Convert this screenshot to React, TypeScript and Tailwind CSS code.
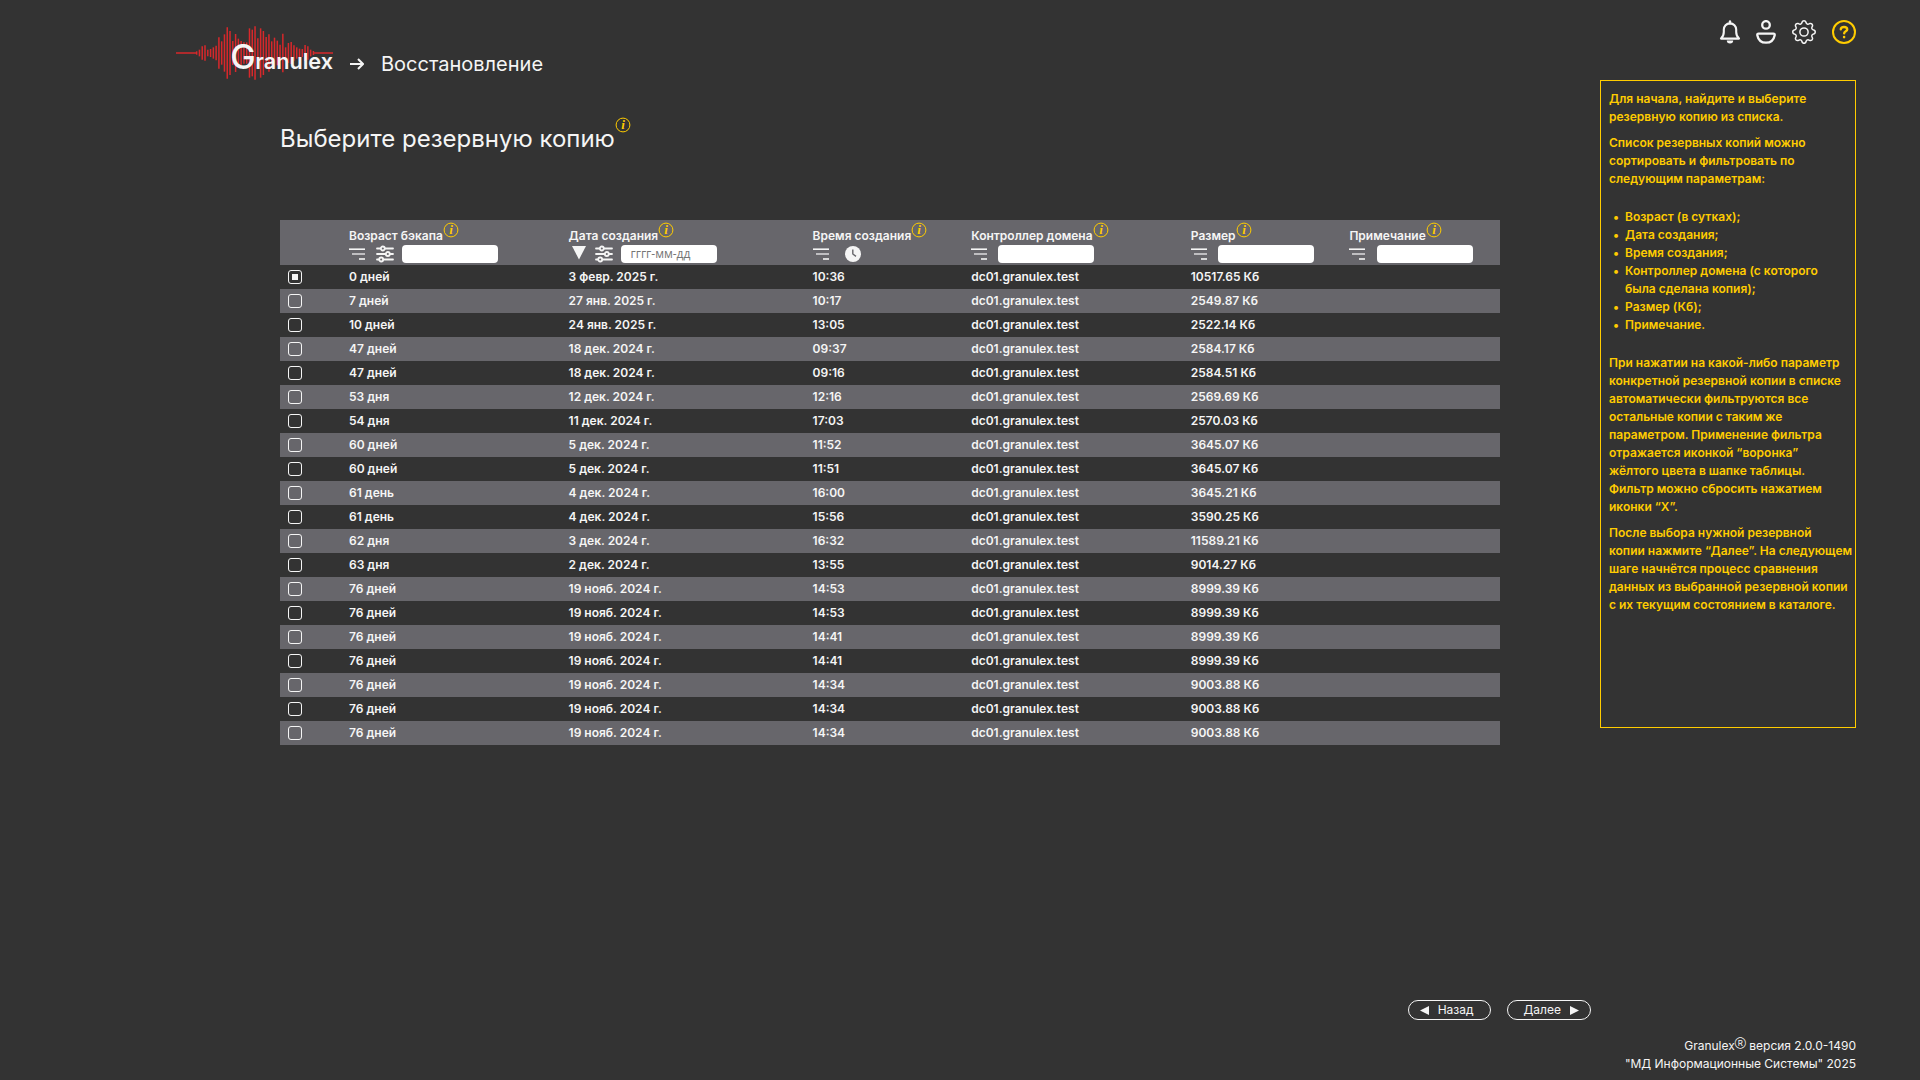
import { FC, ReactNode, useState } from "react";
import { BsGear } from "react-icons/bs";

type Backup = [age: string, date: string, time: string, size: string];

const DC = "dc01.granulex.test";

const backups: Backup[] = [
  ["0 дней", "3 февр. 2025 г.", "10:36", "10517.65 Кб"],
  ["7 дней", "27 янв. 2025 г.", "10:17", "2549.87 Кб"],
  ["10 дней", "24 янв. 2025 г.", "13:05", "2522.14 Кб"],
  ["47 дней", "18 дек. 2024 г.", "09:37", "2584.17 Кб"],
  ["47 дней", "18 дек. 2024 г.", "09:16", "2584.51 Кб"],
  ["53 дня", "12 дек. 2024 г.", "12:16", "2569.69 Кб"],
  ["54 дня", "11 дек. 2024 г.", "17:03", "2570.03 Кб"],
  ["60 дней", "5 дек. 2024 г.", "11:52", "3645.07 Кб"],
  ["60 дней", "5 дек. 2024 г.", "11:51", "3645.07 Кб"],
  ["61 день", "4 дек. 2024 г.", "16:00", "3645.21 Кб"],
  ["61 день", "4 дек. 2024 г.", "15:56", "3590.25 Кб"],
  ["62 дня", "3 дек. 2024 г.", "16:32", "11589.21 Кб"],
  ["63 дня", "2 дек. 2024 г.", "13:55", "9014.27 Кб"],
  ["76 дней", "19 нояб. 2024 г.", "14:53", "8999.39 Кб"],
  ["76 дней", "19 нояб. 2024 г.", "14:53", "8999.39 Кб"],
  ["76 дней", "19 нояб. 2024 г.", "14:41", "8999.39 Кб"],
  ["76 дней", "19 нояб. 2024 г.", "14:41", "8999.39 Кб"],
  ["76 дней", "19 нояб. 2024 г.", "14:34", "9003.88 Кб"],
  ["76 дней", "19 нояб. 2024 г.", "14:34", "9003.88 Кб"],
  ["76 дней", "19 нояб. 2024 г.", "14:34", "9003.88 Кб"],
];

const helpItems = [
  "Возраст (в сутках);",
  "Дата создания;",
  "Время создания;",
  "Контроллер домена (с которого была сделана копия);",
  "Размер (Кб);",
  "Примечание.",
];

// half heights of the wave bars, left to right
const wave = [
  5, 10, 20, 23, 10, 12, 17, 22, 47, 35, 56, 77, 66, 36, 57, 43, 36, 32, 32, 74,
  70, 80, 44, 74, 66, 48, 56, 35, 46, 37, 25, 58, 17, 30, 33, 23, 17, 13, 12,
  24, 20, 10, 6,
];

const Logo: FC = () => (
  <svg viewBox="0 0 474 162" className="w-[158px] h-[54px] overflow-visible">
    <g stroke="#d8282b">
      <path d="M0 81H62M412 81H471" strokeWidth="4" />
      {wave.map((h, i) => (
        <path
          key={i}
          d={`M${62 + i * 8.34} ${81 - h}v${h * 2}`}
          strokeWidth="4.5"
        />
      ))}
    </g>
    <g fill="#f5f5f5" fontFamily="Inter, sans-serif">
      <text x="163" y="130" fontSize="102" fontWeight="500">
        G
      </text>
      <text x="238" y="130" fontSize="65" fontWeight="600">
        ranulex
      </text>
    </g>
  </svg>
);

const InfoIcon: FC = () => (
  <svg viewBox="0 0 16 16" className="size-4 shrink-0" aria-hidden="true">
    <circle cx="8" cy="8" r="6.9" fill="none" stroke="#ffcc00" />
    <text
      x="8"
      y="12"
      textAnchor="middle"
      fontFamily="Liberation Serif, serif"
      fontStyle="italic"
      fontWeight="bold"
      fontSize="13"
      fill="#ffcc00"
    >
      i
    </text>
  </svg>
);

const SortIcon: FC = () => (
  <svg viewBox="0 0 16 12" className="w-4 h-3" fill="none" strokeWidth="1.6">
    <path d="M0 1.2H16" stroke="#f5f5f5" />
    <path d="M3 6H16" stroke="#d6d5d8" />
    <path d="M10 11H16" stroke="#f5f5f5" />
  </svg>
);

const FunnelIcon: FC = () => (
  <svg viewBox="0 0 16 14" className="w-4 h-3.5 mb-0.5">
    <path d="M1 0H15L8 13.5Z" fill="#f5f5f5" />
  </svg>
);

const SlidersIcon: FC = () => (
  <svg
    viewBox="0 0 18 18"
    className="size-[18px]"
    fill="none"
    stroke="#f5f5f5"
    strokeWidth="1.8"
    strokeLinecap="round"
  >
    <path d="M1 3.5H4.6M9 3.5H17M1 9H9.6M14 9H17M1 14.5H3M7.4 14.5H17" />
    <circle cx="6.8" cy="3.5" r="2" />
    <circle cx="11.8" cy="9" r="2" />
    <circle cx="5.2" cy="14.5" r="2" />
  </svg>
);

const ClockIcon: FC = () => (
  <svg viewBox="0 0 16 16" className="size-4" fill="none">
    <circle cx="8" cy="8" r="8" fill="#f5f5f5" />
    <path d="M7.8 3.6V8L11 10.4" stroke="#67666b" strokeWidth="1.4" />
  </svg>
);

const IconButton: FC<{ label: string; children: ReactNode }> = ({
  label,
  children,
}) => (
  <button type="button" aria-label={label} className="flex cursor-pointer">
    {children}
  </button>
);

const Toolbar: FC = () => (
  <nav className="flex gap-3 items-center h-6">
    <IconButton label="Уведомления">
      <svg viewBox="0 0 24 24" className="size-6" fill="none" stroke="#f5f5f5">
        <path
          d="M3 18.6H21C19.3 17 18.2 15.6 18.2 12V9.6C18.2 6.2 15.6 3.4 12 3.4S5.8 6.2 5.8 9.6V12C5.8 15.6 4.7 17 3 18.6Z"
          strokeWidth="2.1"
          strokeLinejoin="round"
        />
        <path d="M12 1.4V3.4" strokeWidth="2.4" strokeLinecap="round" />
        <path
          d="M8.8 20.6H15.2A3.2 3 0 0 1 8.8 20.6Z"
          fill="#f5f5f5"
          stroke="none"
        />
      </svg>
    </IconButton>
    <IconButton label="Профиль">
      <svg
        viewBox="0 0 24 24"
        className="size-6"
        fill="none"
        stroke="#f5f5f5"
        strokeWidth="2.3"
      >
        <circle cx="12" cy="4.9" r="3.8" />
        <path
          d="M4.6 13.6H19.4Q21 13.6 20.7 15.2C19.8 19.8 16.6 22.7 12 22.7S4.2 19.8 3.3 15.2Q3 13.6 4.6 13.6Z"
          strokeLinejoin="round"
        />
      </svg>
    </IconButton>
    <IconButton label="Настройки">
      <BsGear className="size-6 ml-0.5 mr-1 text-[#f5f5f5]" />
    </IconButton>
    <IconButton label="Помощь">
      <svg
        viewBox="0 0 24 24"
        className="size-6"
        fill="none"
        stroke="#ffcc00"
        strokeWidth="2"
        strokeLinecap="round"
      >
        <circle cx="12" cy="12" r="11" />
        <path
          d="M8.8 9.2C8.8 7.8 10.1 7 12 7S15.2 7.9 15.2 9.4C15.2 11.2 12.2 11.2 12.2 13.2"
          strokeWidth="2.4"
        />
        <path d="M12.1 17V17.1" strokeWidth="2.6" />
      </svg>
    </IconButton>
  </nav>
);

type ColumnHeadProps = {
  id: string;
  title: string;
  placeholder?: string;
  input?: boolean;
  children: ReactNode;
};

const ColumnHead: FC<ColumnHeadProps> = ({
  id,
  title,
  placeholder,
  input = true,
  children,
}) => (
  <th className="p-0 pl-2 align-top font-semibold text-left">
    <div className="flex h-6 mt-px">
      <label htmlFor={id} className="pt-1.5 leading-[18px]">
        {title}
      </label>
      <span className="pt-px">
        <InfoIcon />
      </span>
    </div>
    <div className="flex items-center h-[18px]">
      {children}
      {input && (
        <input
          id={id}
          type="text"
          placeholder={placeholder}
          className="w-24 h-[18px] px-2.5 pb-0.5 rounded bg-white text-gray-800 font-normal font-['Open_Sans',sans-serif] placeholder:text-[#757575]"
        />
      )}
    </div>
  </th>
);

const Help: FC = () => (
  <aside className="w-64 h-[648px] shrink-0 border border-[#ffcc00] pl-2 pr-1.5 pt-[9px] text-xs leading-[18px] font-semibold text-[#ffcc00]">
    <p className="mb-2">
      Для начала, найдите и выберите резервную копию из списка.
    </p>
    <p>
      Список резервных копий можно сортировать и фильтровать по следующим
      параметрам:
    </p>
    <ul className="my-5 pl-1">
      {helpItems.map((item) => (
        <li
          key={item}
          className="flex before:content-['•'] before:w-3 before:shrink-0"
        >
          {item}
        </li>
      ))}
    </ul>
    <p className="mb-2">
      При нажатии на какой-либо параметр конкретной резервной копии в списке
      автоматически фильтруются все остальные копии с таким же параметром.
      Применение фильтра отражается иконкой “воронка” жёлтого цвета в шапке
      таблицы. Фильтр можно сбросить нажатием иконки “X”.
    </p>
    <p className="-mr-1">
      После выбора нужной резервной
      <br />
      копии нажмите “Далее”. На следующем
      <br />
      шаге начнётся процесс сравнения
      <br />
      данных из выбранной резервной копии с их текущим состоянием в каталоге.
    </p>
  </aside>
);

const App: FC = () => {
  const [selected, setSelected] = useState(0);

  return (
    <div className="min-h-screen flex flex-col bg-[#333333] text-[#f5f5f5] font-['Inter',sans-serif]">
      <header className="h-20 flex justify-between items-start pl-44 pr-16">
        <div className="flex pt-[26px]">
          <Logo />
          <div className="flex items-center gap-[17px] pl-4 pt-[22px]">
            <svg
              viewBox="0 0 14 12"
              className="w-[14px] h-3"
              fill="none"
              stroke="#f5f5f5"
              strokeWidth="2"
            >
              <path d="M0 6H13M8 1L13 6L8 11" />
            </svg>
            <span className="text-xl">Восстановление</span>
          </div>
        </div>
        <div className="pt-5">
          <Toolbar />
        </div>
      </header>

      <div className="flex-1 flex pl-[280px] pr-16 gap-[100px]">
        <main className="flex-1">
          <div className="flex pt-[37px]">
            <h1 className="text-2xl leading-[44px]">
              Выберите резервную копию
            </h1>
            <InfoIcon />
          </div>

          <table className="w-full mt-[59px] table-fixed border-collapse text-xs font-semibold">
            <colgroup>
              <col className="w-[5%]" />
              <col className="w-[18%]" />
              <col className="w-[20%]" />
              <col className="w-[13%]" />
              <col className="w-[18%]" />
              <col className="w-[13%]" />
              <col className="w-[13%]" />
            </colgroup>
            <thead>
              <tr className="h-[45px] bg-[#67666b]">
                <th className="p-0" />
                <ColumnHead id="age" title="Возраст бэкапа">
                  <span className="flex items-center gap-[11px] mr-2">
                    <SortIcon />
                    <SlidersIcon />
                  </span>
                </ColumnHead>
                <ColumnHead
                  id="date"
                  title="Дата создания"
                  placeholder="гггг-мм-дд"
                >
                  <span className="flex items-center gap-2 ml-0.5 mr-2">
                    <FunnelIcon />
                    <SlidersIcon />
                  </span>
                </ColumnHead>
                <ColumnHead id="time" title="Время создания" input={false}>
                  <span className="flex items-center gap-4">
                    <SortIcon />
                    <button id="time" type="button" aria-label="Выбрать время">
                      <ClockIcon />
                    </button>
                  </span>
                </ColumnHead>
                <ColumnHead id="dc" title="Контроллер домена">
                  <span className="mr-[11px]">
                    <SortIcon />
                  </span>
                </ColumnHead>
                <ColumnHead id="size" title="Размер">
                  <span className="mr-[11px]">
                    <SortIcon />
                  </span>
                </ColumnHead>
                <ColumnHead id="note" title="Примечание">
                  <span className="mr-3">
                    <SortIcon />
                  </span>
                </ColumnHead>
              </tr>
            </thead>
            <tbody>
              {backups.map(([age, date, time, size], i) => (
                <tr key={i} className="h-6 even:bg-[#67666b]">
                  <td className="p-0 pl-2">
                    <input
                      type="checkbox"
                      aria-label={`${age}, ${date}, ${time}`}
                      checked={selected === i}
                      onChange={() => setSelected(i)}
                      className="block size-3.5 appearance-none rounded-[3px] border border-[#f5f5f5] p-[3px] bg-clip-content checked:bg-[#f5f5f5]"
                    />
                  </td>
                  <td className="p-0 pl-2">{age}</td>
                  <td className="p-0 pl-2">{date}</td>
                  <td className="p-0 pl-2">{time}</td>
                  <td className="p-0 pl-2">{DC}</td>
                  <td className="p-0 pl-2">{size}</td>
                  <td className="p-0 pl-2" />
                </tr>
              ))}
            </tbody>
          </table>
        </main>
        <Help />
      </div>

      <div className="flex justify-end gap-4 pr-[329px] text-xs">
        <button
          type="button"
          className="flex items-center gap-[9px] h-5 pl-[11px] pr-4 rounded-full border border-[#f5f5f5]"
        >
          <svg viewBox="0 0 9 9" className="size-[9px]" fill="#f5f5f5">
            <path d="M9 0V9L0 4.5Z" />
          </svg>
          Назад
        </button>
        <button
          type="button"
          className="flex items-center gap-[9px] h-5 pl-4 pr-[11px] rounded-full border border-[#f5f5f5]"
        >
          Далее
          <svg viewBox="0 0 9 9" className="size-[9px]" fill="#f5f5f5">
            <path d="M0 0V9L9 4.5Z" />
          </svg>
        </button>
      </div>

      <footer className="pt-[17px] pb-[7px] pr-16 text-right text-xs leading-[18px]">
        <p>
          Granulex<sup className="text-[8px] leading-none">Ⓡ</sup> версия
          2.0.0-1490
        </p>
        <p>"МД Информационные Системы" 2025</p>
      </footer>
    </div>
  );
};

export default App;
